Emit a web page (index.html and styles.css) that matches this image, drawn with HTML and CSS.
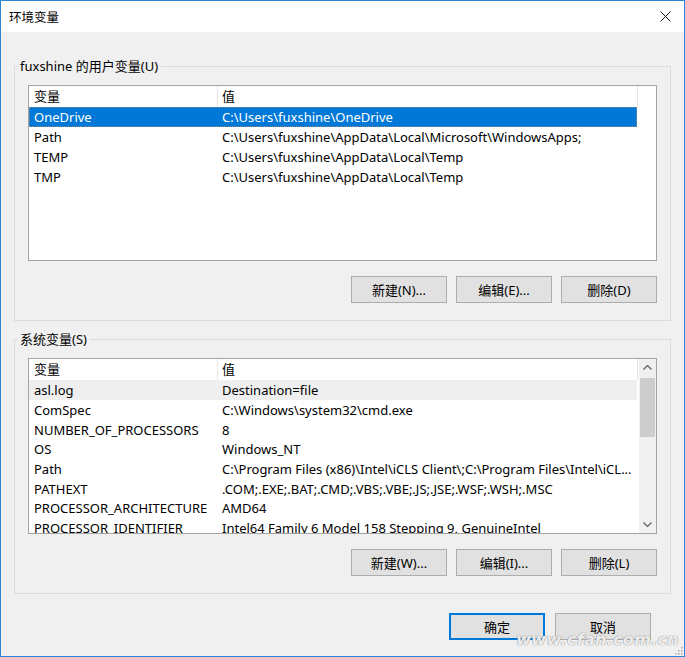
FILE: index.html
```html
<!DOCTYPE html>
<html lang="zh-CN">
<head>
<meta charset="utf-8">
<title>环境变量</title>
<link rel="stylesheet" href="styles.css">
</head>
<body>
<div class="window">
  <div class="titlebar">
    <span class="title">环境变量</span>
    <span class="close">
      <svg width="11" height="11" viewBox="0 0 11 11"><path d="M0.5 0.5 L10.5 10.5 M10.5 0.5 L0.5 10.5" stroke="#1a1a1a" stroke-width="1" fill="none"/></svg>
    </span>
  </div>
  <div class="content">
    <fieldset class="group">
      <legend>fuxshine 的用户变量(U)</legend>
      <div class="list">
        <div class="list-inner">
          <div class="row head"><span class="c1">变量</span><span class="c2">值</span></div>
          <div class="row selected"><span class="c1">OneDrive</span><span class="c2">C:\Users\fuxshine\OneDrive</span></div>
          <div class="row"><span class="c1">Path</span><span class="c2">C:\Users\fuxshine\AppData\Local\Microsoft\WindowsApps;</span></div>
          <div class="row"><span class="c1">TEMP</span><span class="c2">C:\Users\fuxshine\AppData\Local\Temp</span></div>
          <div class="row"><span class="c1">TMP</span><span class="c2">C:\Users\fuxshine\AppData\Local\Temp</span></div>
        </div>
      </div>
      <div class="btns">
        <button class="btn">新建(N)...</button>
        <button class="btn">编辑(E)...</button>
        <button class="btn">删除(D)</button>
      </div>
    </fieldset>

    <fieldset class="group second">
      <legend>系统变量(S)</legend>
      <div class="list">
        <div class="list-inner">
          <div class="row head"><span class="c1">变量</span><span class="c2">值</span></div>
          <div class="row tight hover"><span class="c1">asl.log</span><span class="c2">Destination=file</span></div>
          <div class="row tight"><span class="c1">ComSpec</span><span class="c2">C:\Windows\system32\cmd.exe</span></div>
          <div class="row tight"><span class="c1">NUMBER_OF_PROCESSORS</span><span class="c2">8</span></div>
          <div class="row tight"><span class="c1">OS</span><span class="c2">Windows_NT</span></div>
          <div class="row tight"><span class="c1">Path</span><span class="c2">C:\Program Files (x86)\Intel\iCLS Client\;C:\Program Files\Intel\iCL...</span></div>
          <div class="row tight"><span class="c1">PATHEXT</span><span class="c2">.COM;.EXE;.BAT;.CMD;.VBS;.VBE;.JS;.JSE;.WSF;.WSH;.MSC</span></div>
          <div class="row tight"><span class="c1">PROCESSOR_ARCHITECTURE</span><span class="c2">AMD64</span></div>
          <div class="row tight"><span class="c1">PROCESSOR_IDENTIFIER</span><span class="c2">Intel64 Family 6 Model 158 Stepping 9, GenuineIntel</span></div>
        </div>
        <div class="scrollbar">
          <div class="arrow">
            <svg width="9" height="5" viewBox="0 0 9 5"><polyline points="0.5,4.5 4.5,0.5 8.5,4.5" stroke="#606060" stroke-width="1.2" fill="none"/></svg>
          </div>
          <div class="track"><div class="thumb"></div></div>
          <div class="arrow">
            <svg width="9" height="5" viewBox="0 0 9 5"><polyline points="0.5,0.5 4.5,4.5 8.5,0.5" stroke="#606060" stroke-width="1.2" fill="none"/></svg>
          </div>
        </div>
      </div>
      <div class="btns">
        <button class="btn">新建(W)...</button>
        <button class="btn">编辑(I)...</button>
        <button class="btn">删除(L)</button>
      </div>
    </fieldset>

    <div class="dlg-btns">
      <button class="btn default">确定</button>
      <button class="btn">取消</button>
    </div>
  </div>
  <div class="watermark">www.cfan.com.cn</div>
  <div class="grip">
    <svg width="9" height="9" viewBox="0 0 9 9" fill="#a8a8a8">
      <rect x="7" y="1" width="1.5" height="1.5"/>
      <rect x="4" y="4" width="1.5" height="1.5"/><rect x="7" y="4" width="1.5" height="1.5"/>
      <rect x="1" y="7" width="1.5" height="1.5"/><rect x="4" y="7" width="1.5" height="1.5"/><rect x="7" y="7" width="1.5" height="1.5"/>
    </svg>
  </div>
</div>
</body>
</html>
```

FILE: styles.css
```css
html, body {
  margin: 0;
  padding: 0;
  background: #ffffff;
}

.window {
  position: relative;
  width: 685px;
  height: 657px;
  box-sizing: border-box;
  border: 1px solid #2b86d6;
  background: #f0f0f0;
  font-family: "Segoe UI", "Noto Sans", "Noto Sans CJK SC", sans-serif;
  font-size: 13px;
  color: #000;
  display: flex;
  flex-direction: column;
  overflow: hidden;
}

.titlebar {
  height: 31px;
  background: #ffffff;
  display: flex;
  align-items: center;
  justify-content: space-between;
  padding: 0 13px 0 8px;
  flex: none;
}

.title {
  font-family: "Noto Sans CJK SC", sans-serif;
  font-size: 12.5px;
}

.close {
  display: flex;
  align-items: center;
}

.content {
  flex: 1;
  padding: 26px 13px 0 13px;
  display: flex;
  flex-direction: column;
}

.group {
  margin: 0;
  border: 1px solid #dcdcdc;
  padding: 0 13px 17px 13px;
  min-width: 0;
}

.group.second {
  margin-top: 10px;
}

.group legend {
  padding: 0 3px;
  margin-left: -11px;
  line-height: 16px;
  height: 16px;
}

.list {
  margin-top: 11px;
  height: 176px;
  box-sizing: border-box;
  border: 1px solid #a3a3a3;
  background: #ffffff;
  display: flex;
}

.list-inner {
  flex: 1;
  overflow: hidden;
}

.row {
  display: flex;
  height: 20px;
  line-height: 20px;
  width: 608px;
  white-space: nowrap;
}

.row.tight {
  height: 19.7px;
  line-height: 19.7px;
  padding-top: 1.2px;
  box-sizing: border-box;
}

.row .c1 {
  width: 184px;
  padding-left: 5px;
  flex: none;
  overflow: hidden;
}

.row .c2 {
  width: 415px;
  padding-left: 4px;
  flex: none;
  overflow: hidden;
}

.row.head {
  height: 21px;
  line-height: 21px;
  width: 609px;
}

.row.head .c1 {
  width: 183px;
  border-right: 1px solid #e5e5e5;
}

.row.head .c2 {
  width: 415px;
  border-right: 1px solid #e5e5e5;
}

.row.selected {
  background: #0078d7;
  color: #ffffff;
  outline: 1px dotted #8a8a8a;
  outline-offset: -1px;
}

.row.hover {
  background: #efefef;
}

.scrollbar {
  width: 17px;
  flex: none;
  background: #f0f0f0;
  display: flex;
  flex-direction: column;
}

.arrow {
  height: 17px;
  display: flex;
  align-items: center;
  justify-content: center;
  flex: none;
}

.track {
  flex: 1;
  padding-top: 2px;
}

.thumb {
  height: 59px;
  margin: 0 1px;
  background: #cdcdcd;
}

.btns {
  margin-top: 15px;
  display: flex;
  justify-content: flex-end;
  gap: 9px;
}

.btn {
  width: 96px;
  height: 27px;
  box-sizing: border-box;
  background: #e1e1e1;
  border: 1px solid #adadad;
  font-family: "Segoe UI", "Noto Sans", "Noto Sans CJK SC", sans-serif;
  font-size: 13px;
  color: #000;
  padding: 0;
  margin: 0;
}

.btn.default {
  border: 2px solid #0078d7;
}

.dlg-btns {
  margin-top: 19px;
  margin-right: 20px;
  display: flex;
  justify-content: flex-end;
  gap: 10px;
}

.watermark {
  position: absolute;
  right: 5px;
  bottom: 7px;
  font-family: "DejaVu Sans", sans-serif;
  font-style: italic;
  font-weight: bold;
  font-size: 16px;
  letter-spacing: 0.3px;
  color: rgba(255, 255, 255, 0.85);
  text-shadow: 0 0 1px #8c8c8c, 0 0 1px #8c8c8c;
}

.grip {
  position: absolute;
  right: 1px;
  bottom: 1px;
  width: 9px;
  height: 9px;
  display: flex;
}
```
